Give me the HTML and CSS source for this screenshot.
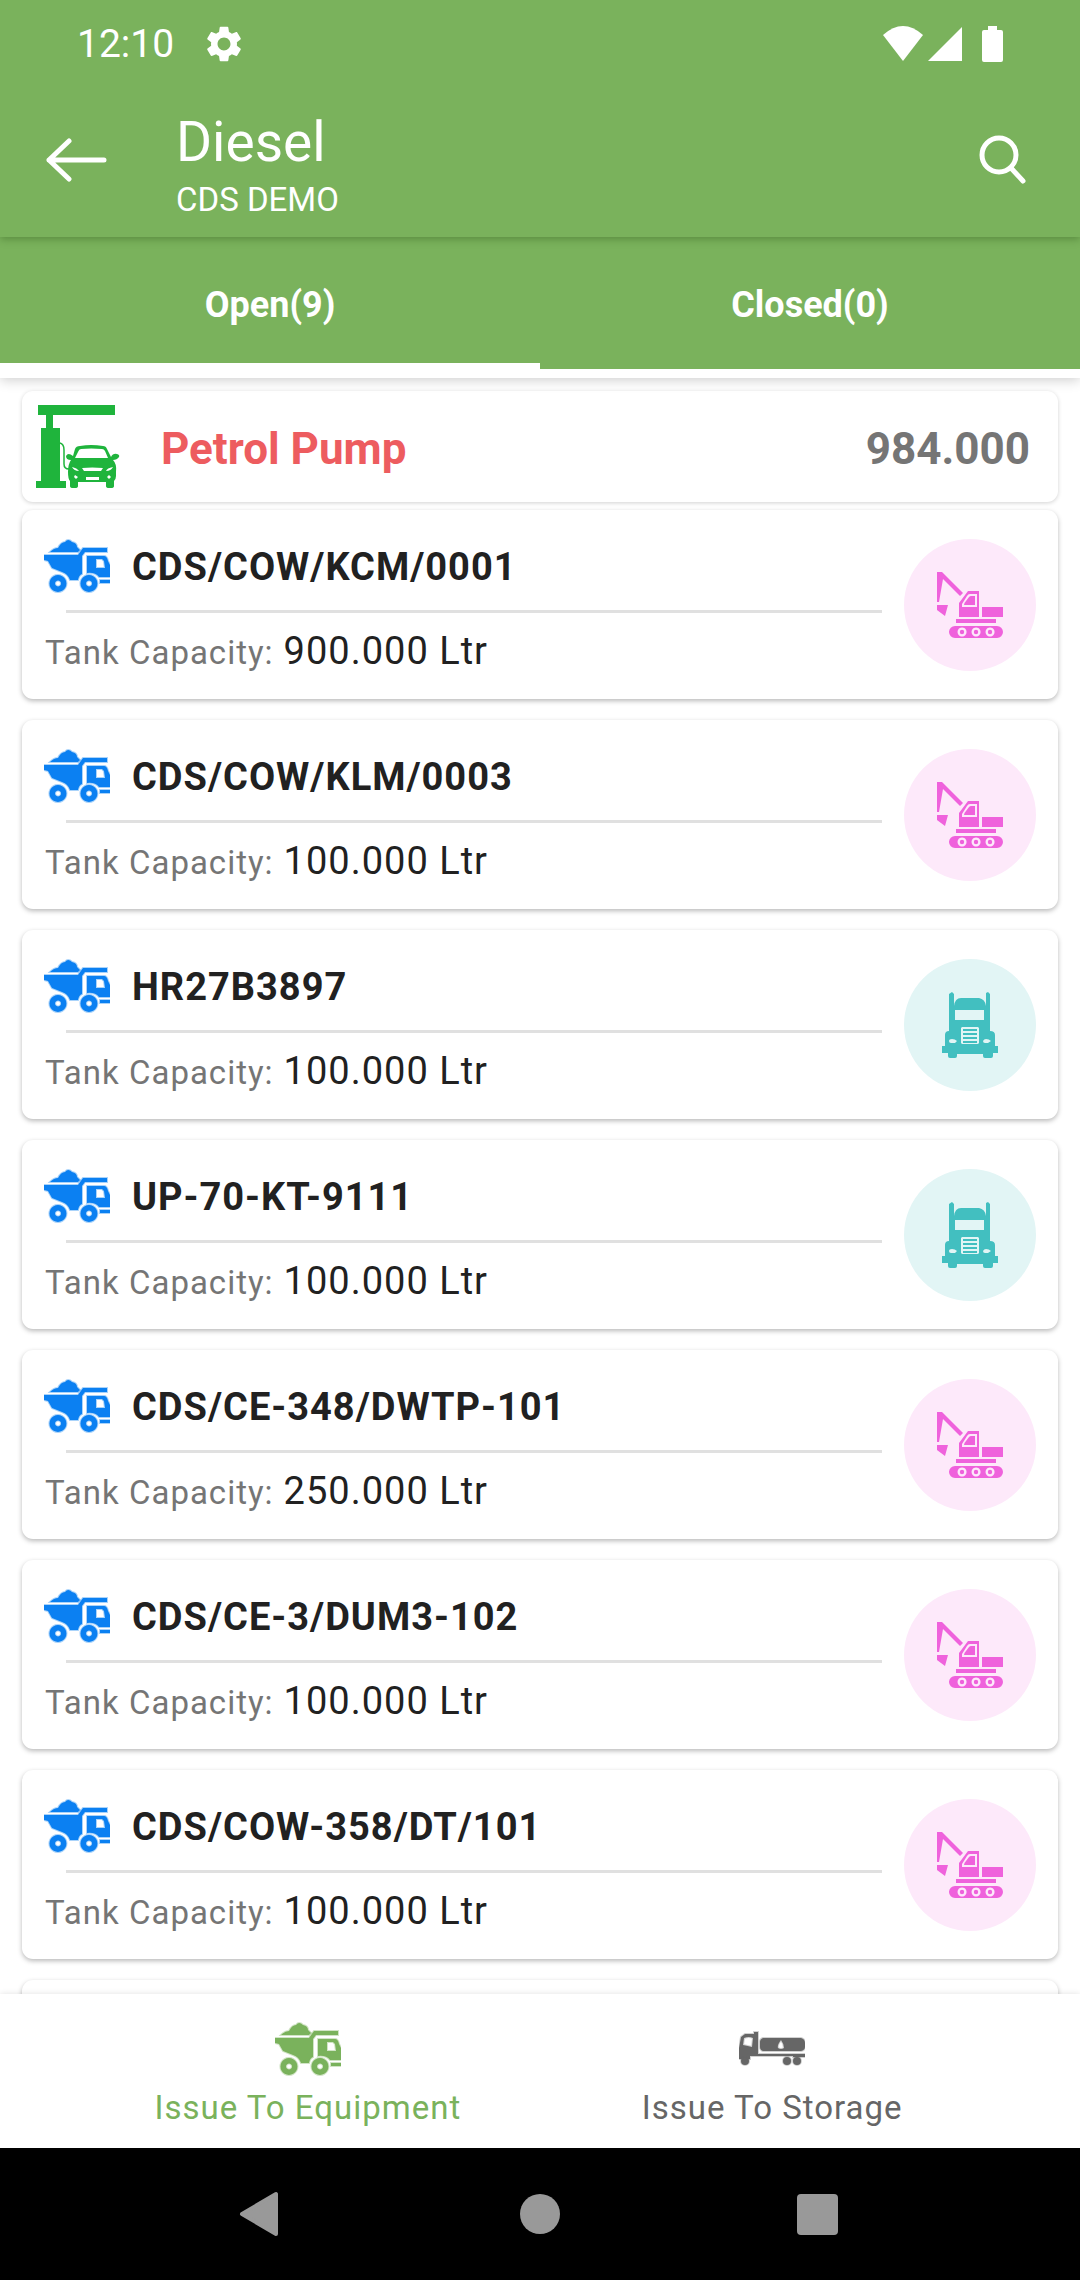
FILE: index.html
```html
<!DOCTYPE html>
<html lang="en">
<head>
<meta charset="utf-8">
<meta name="viewport" content="width=device-width, initial-scale=1">
<title>Diesel</title>
<link rel="stylesheet" href="styles.css">
</head>
<body>
<svg class="sprite" aria-hidden="true">
  <symbol id="dumper" viewBox="0 0 66 54">
    <g stroke="currentColor" stroke-width="2" stroke-opacity=".35">
    <path d="M6 13 Q10 9 14 9 Q17 3 21 3 Q24 -1 28 3 Q33 4 33 8 L36 11 L34 13 Z"/>
    <path d="M0 16 H34 L39 9 H63 V13 H41 L38 17 V35 Q35 36 34 41 H26 Q24 35 18 33 L8 29 L4 22 L0 21 Z"/>
    <path fill-rule="evenodd" d="M43 17 H60 Q63 17 64 22 L66 26 V38 H55 Q51 33 43 34 Z M52 20 V29 H61 L60 22 L58 20 Z"/>
    <path d="M56 41 H66 V44 H56 Z"/>
    <path fill-rule="evenodd" d="M14 36 A8.500 8.500 0 1 1 13.900 36 Z M14 41.500 A3 3 0 1 0 14.100 41.500 Z M45 36 A8.500 8.500 0 1 1 44.900 36 Z M45 41.500 A3 3 0 1 0 45.100 41.500 Z"/>
    </g>
  </symbol>
  <symbol id="digger" viewBox="0 0 66 66">
    <path d="M0 0 H5 L26 21 L23 24 L6 7 L2 30 H0 Z M0 33 H11 L8 44 L0 38 Z"/>
    <path fill-rule="evenodd" d="M22 45 V31 L31 19 H42 V45 Z M25 35 H40 V22 H33 Q31 22 30 24 L25 32 Z"/>
    <path d="M27 33 Q27 31 29 29 L32 25 Q33 24 34 24 H38 V33 Z"/>
    <path d="M45 35 H66 V45 H45 Z M19 47 H59 V51 H19 Z"/>
    <path fill-rule="evenodd" d="M18 54 H60 A6 6 0 0 1 60 66 H18 A6 6 0 0 1 18 54 Z M25 55.500 A4.500 4.500 0 1 0 25.100 55.500 Z M39 55.500 A4.500 4.500 0 1 0 39.100 55.500 Z M53 55.500 A4.500 4.500 0 1 0 53.100 55.500 Z"/>
    <circle cx="25" cy="60" r="2.200"/><circle cx="39" cy="60" r="2.200"/><circle cx="53" cy="60" r="2.200"/>
  </symbol>
  <symbol id="lorry" viewBox="0 0 66 66">
    <path fill-rule="evenodd" d="M12 2 L15 0 L17 2 V14 Q18 6 24 6 H42 Q48 7 49 14 V1 L51 0 L53 2 V39 Q58 39 58 43 V54 H61 V61 H56 V64 Q56 66 54 66 H48 Q46 66 46 64 V62 H20 V64 Q20 66 18 66 H13 Q11 66 11 64 V61 H5 V54 H8 V43 Q8 39 12 39 Z M18 18 V28 H47 V18 Z M24 36 V51 L25 52 H41 L42 51 V36 L41 35 H25 Z M12 49 Q12 51 14 51 H18 L20 49 Q18 47 15 47 Q12 47 12 49 Z M46 49 Q46 51 48 51 H51 L54 49 Q52 47 49 47 Q47 47 46 49 Z"/>
    <path d="M26 37 H40 V39 H26 Z M26 41 H40 V43 H26 Z M26 45 H40 V47 H26 Z M26 49 H40 V51 H26 Z"/>
  </symbol>
  <symbol id="tanker" viewBox="0 0 66 54">
    <g stroke="currentColor" stroke-width="2" stroke-opacity=".3">
    <path fill-rule="evenodd" d="M0 26 L2 15 L6 12 H15 V10 H19 V32 H66 V35 H54 V34 H11 V37 H0 Z M5 16 L4 23 Q9 24 13 25 L14 16 Q10 14 5 16 Z"/>
    <path fill-rule="evenodd" d="M24 16 H62 Q66 17 66 21 V25 Q66 28 62 29 H24 Q21 28 21 25 V20 Q21 17 24 16 Z M42 18 Q38 23 39 26 Q42 28 45 26 Q45 22 42 18 Z"/>
    <circle cx="6" cy="39" r="4"/><circle cx="48" cy="39" r="4"/><circle cx="58" cy="39" r="4"/>
    </g>
  </symbol>
</svg>

<div class="status">
  <span class="clock">12:10</span>
  <svg class="gear" viewBox="2 2 20 20" aria-hidden="true"><path d="M19.140 12.940c.04-.3.06-.61.06-.94 0-.32-.02-.64-.07-.94l2.030-1.580c.18-.14.23-.41.12-.61l-1.920-3.320c-.12-.22-.37-.29-.59-.22l-2.390.96c-.5-.38-1.030-.7-1.620-.94l-.36-2.540c-.04-.24-.24-.41-.48-.41h-3.840c-.24 0-.43.17-.47.41l-.36 2.540c-.59.24-1.130.57-1.620.94l-2.390-.96c-.22-.08-.47 0-.59.22L2.740 8.870c-.12.21-.08.47.12.61l2.030 1.580c-.05.3-.09.63-.09.94s.02.64.07.94l-2.030 1.580c-.18.14-.23.41-.12.61l1.920 3.320c.12.22.37.29.59.22l2.390-.96c.5.38 1.030.7 1.620.94l.36 2.540c.05.24.24.41.48.41h3.840c.24 0 .44-.17.47-.41l.36-2.540c.59-.24 1.130-.56 1.620-.94l2.390.96c.22.08.47 0 .59-.22l1.920-3.320c.12-.22.07-.47-.12-.61l-2.010-1.580zM12 15.600c-1.980 0-3.600-1.620-3.600-3.600s1.620-3.600 3.600-3.600 3.600 1.620 3.600 3.600-1.620 3.600-3.600 3.600z"/></svg>
  <svg class="signals" viewBox="0 0 120 36" aria-hidden="true">
    <path d="M0 9 Q20 -9 40 9 L20 35 Z"/>
    <path d="M45 35 L79 1 V35 Z"/>
    <path d="M105 0 H114 V4 H118 Q120 4 120 6 V34 Q120 36 118 36 H101 Q99 36 99 34 V6 Q99 4 101 4 H105 Z"/>
  </svg>
</div>

<header class="appbar">
  <button class="icon-button" type="button" aria-label="Back">
    <svg class="back" viewBox="0 0 62 46"><path d="M23 4 L3 23 L23 42 M3 23 H58"/></svg>
  </button>
  <div class="heading">
    <h1>Diesel</h1>
    <p>CDS DEMO</p>
  </div>
  <button class="icon-button" type="button" aria-label="Search">
    <svg class="search" viewBox="0 0 48 50"><circle cx="20" cy="20" r="17"/><path d="M32 33 L44 46"/></svg>
  </button>
</header>

<div class="tabs" role="tablist">
  <button class="tab active" type="button" role="tab" aria-selected="true">Open(9)</button>
  <button class="tab" type="button" role="tab" aria-selected="false">Closed(0)</button>
</div>

<main class="content">
  <section class="pump">
    <svg class="pump-icon" viewBox="0 0 84 83" aria-hidden="true">
      <path d="M2 0 H79 V10 H17 V23 H24 V76 H30 V83 H0 V76 H5 V23 H10 V10 H2 Z"/>
      <path class="hose" d="M24 38 Q28 39 28 45 V59 Q28 64 33 64"/>
      <path fill-rule="evenodd" d="M39 44 Q40 41 44 41 Q55 39 67 41 Q70 41 71 44 L75 52 Q77 48 81 49 Q84 50 83 52 Q81 55 77 55 Q81 59 80 67 V71 Q80 74 78 76 V81 Q78 83 75 83 H73 Q70 83 70 81 V77 H42 V81 Q42 83 39 83 H37 Q34 83 34 81 V76 Q32 74 32 67 Q32 59 35 55 Q30 55 30 51 Q32 47 37 51 Z M45 44 Q43 44 42 47 L39 53 H72 L69 46 Q68 44 66 44 Q55 43 45 44 Z M46 63 L48 66 H65 L67 63 Q56 62 46 63 Z M36 62 Q38 66 43 66 Q41 63 36 62 Z M77 62 Q71 63 70 66 Q75 66 77 62 Z M50 72 V75 H63 V72 Z M39 70 L38 72 L40 74 L42 72 Z M73 70 L71 72 L73 74 L75 72 Z"/>
    </svg>
    <h2>Petrol Pump</h2>
    <output>984.000</output>
  </section>

  <ul class="list">
    <li class="card">
      <div class="info">
        <div class="name"><svg class="dumper"><use href="#dumper"/></svg><h3>CDS/COW/KCM/0001</h3></div>
        <p class="capacity"><span>Tank Capacity:</span> <b>900.000 Ltr</b></p>
      </div>
      <div class="badge digger"><svg><use href="#digger"/></svg></div>
    </li>
    <li class="card">
      <div class="info">
        <div class="name"><svg class="dumper"><use href="#dumper"/></svg><h3>CDS/COW/KLM/0003</h3></div>
        <p class="capacity"><span>Tank Capacity:</span> <b>100.000 Ltr</b></p>
      </div>
      <div class="badge digger"><svg><use href="#digger"/></svg></div>
    </li>
    <li class="card">
      <div class="info">
        <div class="name"><svg class="dumper"><use href="#dumper"/></svg><h3>HR27B3897</h3></div>
        <p class="capacity"><span>Tank Capacity:</span> <b>100.000 Ltr</b></p>
      </div>
      <div class="badge lorry"><svg><use href="#lorry"/></svg></div>
    </li>
    <li class="card">
      <div class="info">
        <div class="name"><svg class="dumper"><use href="#dumper"/></svg><h3>UP-70-KT-9111</h3></div>
        <p class="capacity"><span>Tank Capacity:</span> <b>100.000 Ltr</b></p>
      </div>
      <div class="badge lorry"><svg><use href="#lorry"/></svg></div>
    </li>
    <li class="card">
      <div class="info">
        <div class="name"><svg class="dumper"><use href="#dumper"/></svg><h3>CDS/CE-348/DWTP-101</h3></div>
        <p class="capacity"><span>Tank Capacity:</span> <b>250.000 Ltr</b></p>
      </div>
      <div class="badge digger"><svg><use href="#digger"/></svg></div>
    </li>
    <li class="card">
      <div class="info">
        <div class="name"><svg class="dumper"><use href="#dumper"/></svg><h3>CDS/CE-3/DUM3-102</h3></div>
        <p class="capacity"><span>Tank Capacity:</span> <b>100.000 Ltr</b></p>
      </div>
      <div class="badge digger"><svg><use href="#digger"/></svg></div>
    </li>
    <li class="card">
      <div class="info">
        <div class="name"><svg class="dumper"><use href="#dumper"/></svg><h3>CDS/COW-358/DT/101</h3></div>
        <p class="capacity"><span>Tank Capacity:</span> <b>100.000 Ltr</b></p>
      </div>
      <div class="badge digger"><svg><use href="#digger"/></svg></div>
    </li>
    <li class="card" aria-hidden="true"></li>
  </ul>
</main>

<nav class="bottom-nav">
  <a class="current" href="#equipment" aria-current="page"><svg><use href="#dumper"/></svg>Issue To Equipment</a>
  <a href="#storage"><svg><use href="#tanker"/></svg>Issue To Storage</a>
</nav>

<div class="system-nav">
  <button type="button" aria-label="Back"><svg viewBox="0 0 46 46"><path d="M37 3 V43 L3 23 Z" stroke="#999" stroke-width="4" stroke-linejoin="round"/></svg></button>
  <button type="button" aria-label="Home"><svg viewBox="0 0 46 46"><circle cx="23" cy="23" r="20"/></svg></button>
  <button type="button" aria-label="Recents"><svg viewBox="0 0 46 46"><rect x="2" y="3" width="41" height="41" rx="4"/></svg></button>
</div>
</body>
</html>
```
FILE: styles.css
```css
* { box-sizing: border-box; }

body {
  margin: 0;
  height: 100vh;
  display: flex;
  flex-direction: column;
  background: #fff;
  color: #212121;
  font-family: Roboto, "Noto Sans", sans-serif;
}

h1, h2, h3, p, ul { margin: 0; padding: 0; }
button { margin: 0; padding: 0; border: 0; background: none; color: inherit; font: inherit; }
svg { display: block; flex: none; fill: currentColor; }
.sprite { position: absolute; width: 0; height: 0; }

/* Status bar and toolbar */
.status, .appbar, .tab { background: #7ab25c; color: #fff; }
.status {
  position: relative;
  z-index: 3;
  display: flex;
  align-items: center;
  height: 83px;
  flex: none;
  padding: 4px 77px 0 77px;
}
.clock { font-size: 39px; line-height: 48px; }
.gear { width: 36px; height: 36px; margin-left: 32px; }
.signals { width: 120px; height: 36px; margin-left: auto; }

.appbar {
  position: relative;
  z-index: 2;
  display: flex;
  align-items: center;
  height: 154px;
  flex: none;
  padding: 0 53px 0 46px;
  box-shadow: 0 2px 8px rgba(40, 80, 20, .4);
}
.back, .search { fill: none; stroke: #fff; stroke-width: 5; stroke-linecap: round; stroke-linejoin: round; }
.back { width: 62px; height: 46px; }
.search { width: 48px; height: 50px; }
.heading { flex: 1; margin: 15px 0 0 68px; }
.heading h1 { font-size: 55px; line-height: 64px; font-weight: 400; }
.heading p { font-size: 33px; line-height: 52px; }

/* Tabs */
.tabs {
  position: relative;
  z-index: 1;
  display: flex;
  flex: none;
  padding-bottom: 9px;
  background: #fff;
  box-shadow: 0 2px 12px rgba(0, 0, 0, .2);
}
.tab {
  flex: 1;
  height: 132px;
  padding-top: 10px;
  border-bottom: 6px solid #7ab25c;
  font-size: 36px;
  font-weight: 700;
}
.tab.active { border-bottom-color: #fff; }

/* List */
.content { flex: 1; min-height: 0; overflow: hidden; padding: 13px 22px 0; }
.pump, .card {
  display: flex;
  align-items: center;
  border-radius: 11px;
  background: #fff;
}
.pump {
  padding: 14px 28px 14px 14px;
  margin-bottom: 8px;
  font-size: 44px;
  box-shadow: 0 1px 4px rgba(0, 0, 0, .18);
}
.pump-icon { width: 84px; height: 83px; color: #1fb43c; }
.hose { fill: none; stroke: currentColor; stroke-width: 1.500; }
.pump h2, .pump output { padding-top: 4px; font-size: 44px; line-height: 52px; font-weight: 700; }
.pump h2 { flex: 1; margin-left: 41px; color: #ed5c5f; }
.pump output { color: #757575; }

.list { display: flex; flex-direction: column; gap: 21px; list-style: none; }
.card {
  gap: 22px;
  min-height: 189px;
  padding: 22px;
  box-shadow: 0 2px 5px rgba(0, 0, 0, .28);
}
.info { flex: 1; }
.name { display: flex; align-items: center; gap: 22px; height: 66px; }
.name h3 { padding-top: 2px; font-size: 38px; line-height: 48px; font-weight: 700; letter-spacing: 1px; }
.dumper { width: 66px; height: 54px; color: #0b80f2; }
.info::after { content: none; }
.name + .capacity { position: relative; }
.capacity {
  display: flex;
  flex-wrap: wrap;
  align-items: baseline;
  gap: 0 10px;
  padding-left: 1px;
  font-size: 33px;
  line-height: 48px;
  letter-spacing: 1px;
}
.capacity::before {
  content: "";
  flex: 0 0 100%;
  height: 3px;
  margin: 11px 0 14px 21px;
  flex-basis: calc(100% - 21px);
  background: #e0e0e0;
}
.capacity span { color: #757575; }
.capacity b { font-size: 38px; font-weight: 400; }
.badge { display: grid; place-items: center; width: 132px; height: 132px; border-radius: 50%; }
.badge svg { width: 66px; height: 66px; }
.badge.digger { background: #fde9fa; color: #ef62dc; }
.badge.lorry { background: #e2f5f5; color: #42bfc0; }

/* Bottom navigation */
.bottom-nav {
  position: relative;
  display: flex;
  justify-content: center;
  flex: none;
  height: 154px;
  background: #fff;
  box-shadow: 0 0 6px rgba(0, 0, 0, .12);
}
.bottom-nav a {
  display: flex;
  flex-direction: column;
  align-items: center;
  width: 43%;
  padding-top: 28px;
  color: #666;
  font-size: 33px;
  line-height: 40px;
  letter-spacing: 1px;
  text-decoration: none;
}
.bottom-nav .current { color: #7ab25c; }
.bottom-nav svg { width: 66px; height: 54px; margin-bottom: 12px; }

.system-nav {
  display: flex;
  justify-content: space-around;
  align-items: center;
  flex: none;
  height: 132px;
  padding: 0 123px;
  background: #000;
  color: #999;
}
.system-nav svg { width: 46px; height: 46px; }
```
